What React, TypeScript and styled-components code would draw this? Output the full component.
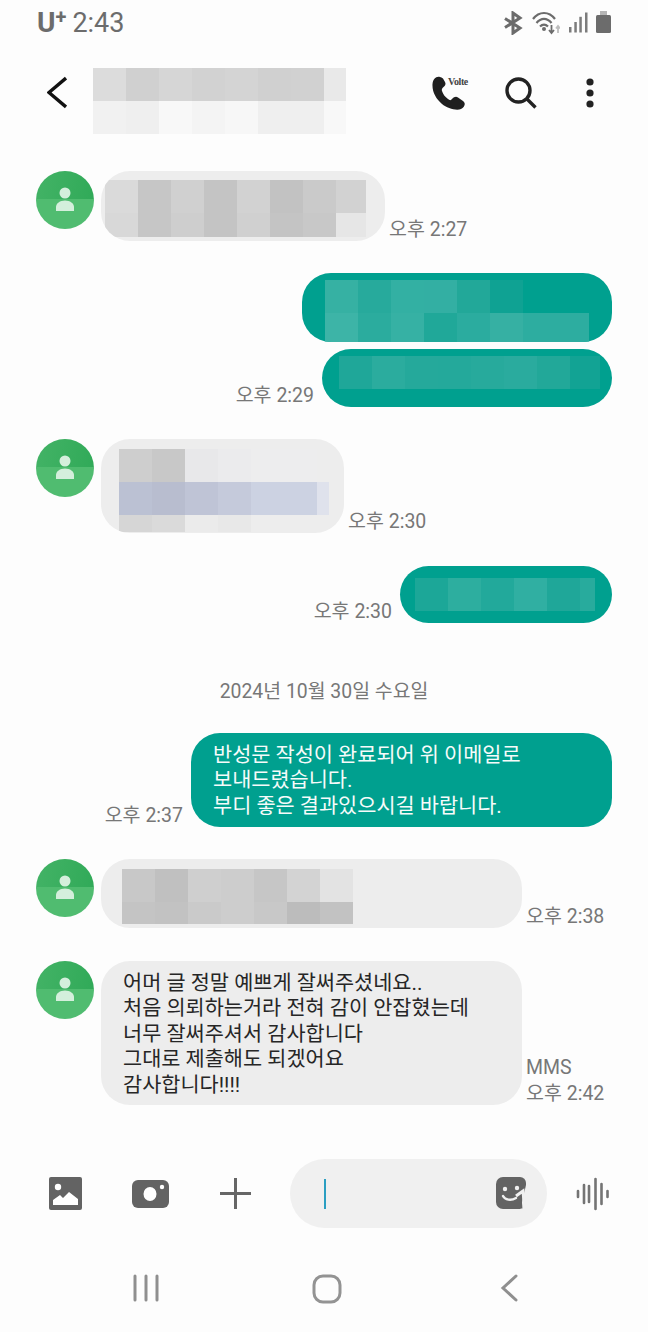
import React from "react";
import styled, { createGlobalStyle } from "styled-components";

const GlobalStyle = createGlobalStyle`
  html, body {
    margin: 0;
    padding: 0;
    background: #fdfdfd;
  }
`;

const Page = styled.div`
  width: 648px;
  height: 1332px;
  display: flex;
  flex-direction: column;
  background: #fdfdfd;
  font-family: Roboto, "Noto Sans CJK KR", sans-serif;
  overflow: hidden;
`;

const StatusBar = styled.div`
  height: 46px;
  padding: 0 37px;
  display: flex;
  align-items: center;
  justify-content: space-between;
  color: #6c6c6c;
  flex-shrink: 0;
`;

const Carrier = styled.div`
  display: flex;
  align-items: center;
  font-size: 27px;
  line-height: 30px;
`;

const CarrierName = styled.span`
  font-weight: 700;
  font-size: 28px;
  margin-right: 6px;
  display: flex;
`;

const CarrierPlus = styled.span`
  font-size: 20px;
  line-height: 20px;
  margin-top: -1px;
`;

const StatusIcons = styled.div`
  display: flex;
  align-items: center;
  gap: 8px;
`;

const Toolbar = styled.div`
  height: 110px;
  padding: 22px 0 0 47px;
  box-sizing: border-box;
  display: flex;
  align-items: flex-start;
  flex-shrink: 0;
`;

const BackSlot = styled.div`
  width: 46px;
  height: 50px;
  display: flex;
  align-items: center;
`;

const Actions = styled.div`
  margin-left: 86px;
  height: 50px;
  display: flex;
  align-items: center;
`;

const PhoneAction = styled.div`
  position: relative;
  width: 73px;
  height: 34px;
`;

const VolteTag = styled.span`
  position: absolute;
  left: 16px;
  top: 1px;
  font-family: "Liberation Serif", serif;
  font-weight: 700;
  font-size: 10px;
  line-height: 10px;
  letter-spacing: -0.4px;
  color: #444;
`;

const SearchAction = styled.div`
  width: 81px;
  height: 32px;
`;

const MessageList = styled.div`
  flex: 1;
  padding: 15px 36px 0;
  display: flex;
  flex-direction: column;
  min-height: 0;
`;

const Row = styled.div<{ $out?: boolean; $top: number }>`
  display: flex;
  align-items: flex-end;
  justify-content: ${(p) => (p.$out ? "flex-end" : "flex-start")};
  margin-top: ${(p) => p.$top}px;
`;

const Avatar = styled.div`
  width: 58px;
  height: 58px;
  border-radius: 50%;
  margin-right: 7px;
  align-self: flex-start;
  flex-shrink: 0;
  background: linear-gradient(to bottom, transparent 48%, #50bc70 48%),
    linear-gradient(100deg, #43b366, #2fa957);
`;

const AvatarIcon = styled.svg`
  display: block;
`;

const Bubble = styled.div<{ $out?: boolean; $w: number; $h: number }>`
  width: ${(p) => p.$w}px;
  height: ${(p) => p.$h}px;
  box-sizing: border-box;
  flex-shrink: 0;
  overflow: hidden;
  border-radius: 29px;
  background: ${(p) => (p.$out ? "#00a08f" : "#ededed")};
  color: ${(p) => (p.$out ? "#f6fbfa" : "#262626")};
`;

const BlurInset = styled.div<{ $x: number; $y: number }>`
  padding: ${(p) => p.$y}px 0 0 ${(p) => p.$x}px;
`;

const BubbleText = styled.div`
  padding: 10px 0 0 22px;
  font-size: 20.8px;
  line-height: 25.4px;
  white-space: nowrap;
`;

const Time = styled.div<{ $out?: boolean }>`
  flex-shrink: 0;
  font-size: 19.5px;
  line-height: 26px;
  color: #777;
  white-space: nowrap;
  margin: ${(p) => (p.$out ? "0 8px -2px 0" : "0 0 -2px 4px")};
`;

const DateLine = styled.div`
  margin: 57px 0 29px;
  height: 24px;
  line-height: 24px;
  text-align: center;
  font-size: 19.4px;
  color: #777;
`;

const Composer = styled.div`
  height: 69px;
  padding-left: 23px;
  display: flex;
  align-items: center;
  flex-shrink: 0;
`;

const ComposerSlot = styled.div`
  width: 85px;
  height: 100%;
  display: flex;
  align-items: center;
  justify-content: center;
`;

const InputPill = styled.div`
  width: 257px;
  height: 69px;
  margin-left: 12px;
  padding: 0 19px 0 34px;
  box-sizing: border-box;
  border-radius: 35px;
  background: #f0f0f0;
  display: flex;
  align-items: center;
  justify-content: space-between;
`;

const Caret = styled.div`
  width: 2px;
  height: 30px;
  background: #2b9fc2;
`;

const VoiceSlot = styled.div`
  flex: 1;
  padding-left: 29px;
  display: flex;
  align-items: center;
`;

const NavBar = styled.div`
  height: 104px;
  padding: 46px 48px 0 55px;
  box-sizing: border-box;
  display: grid;
  grid-template-columns: repeat(3, 1fr);
  align-items: start;
  justify-items: center;
  flex-shrink: 0;
`;

const BlurSvg = styled.svg`
  display: block;
`;

type Block = { cols: number[]; rows: number[]; cells: (string | null)[][] };

// pixelated (censored) parts of the screenshot
function Blur({ cols, rows, cells }: Block) {
  const w = cols.reduce((a, b) => a + b, 0);
  const h = rows.reduce((a, b) => a + b, 0);
  let y = 0;
  return (
    <BlurSvg width={w} height={h} shapeRendering="crispEdges">
      {cells.map((row, r) => {
        let x = 0;
        const rects = row.map((c, i) => {
          const el = c ? <rect key={i} x={x} y={y} width={cols[i]} height={rows[r]} fill={c} /> : null;
          x += cols[i];
          return el;
        });
        y += rows[r];
        return <g key={r}>{rects}</g>;
      })}
    </BlurSvg>
  );
}

const title: Block = {
  cols: [33, 33, 33, 33, 33, 33, 33, 22],
  rows: [33, 33],
  cells: [
    ["#dcdcdc", "#d0d0d0", "#d6d6d6", "#d2d2d2", "#d4d4d4", "#d0d0d0", "#d1d1d1", "#e9e9e9"],
    ["#f1f1f1", "#efefef", "#f8f8f8", "#f4f4f4", "#f7f7f7", "#efefef", "#efefef", "#f8f8f8"],
  ],
};
const msg1: Block = {
  cols: [33, 33, 33, 33, 33, 33, 33, 30],
  rows: [33, 24],
  cells: [
    ["#dadada", "#c6c6c6", "#d0d0d0", "#c4c4c4", "#d2d2d2", "#c2c2c2", "#cacaca", "#d2d2d2"],
    ["#d8d8d8", "#c6c6c6", "#cecece", "#c4c4c4", "#d0d0d0", "#c4c4c4", "#c8c8c8", "#e6e6e6"],
  ],
};
const out1: Block = {
  cols: [33, 33, 33, 33, 33, 33, 33, 33],
  rows: [33, 29],
  cells: [
    ["#36b1a3", "#27aa9c", "#33b0a3", "#33afa3", "#22a899", "#0fa293", null, null],
    ["#3db4a7", "#2bac9e", "#36b1a4", "#20a899", "#2bac9f", "#36b0a3", "#2dada0", "#2dada0"],
  ],
};
const out2: Block = {
  cols: [33, 33, 33, 33, 33, 33, 33, 30],
  rows: [33],
  cells: [["#1fa799", "#2bac9e", "#25a99b", "#24a99b", "#27aa9c", "#2aab9e", "#22a899", "#12a394"]],
};
const msg2: Block = {
  cols: [33, 33, 33, 33, 33, 33, 12],
  rows: [33, 33, 17],
  cells: [
    ["#cecece", "#c8c8c8", "#e8e8ea", "#ebebed", "#ededee", "#ededee", "#ededed"],
    ["#bbc1d3", "#b8bdcf", "#bfc4d6", "#c5cadb", "#ccd2e2", "#ccd2e2", "#dfe2ec"],
    ["#d6d6d6", "#dadada", "#ebebeb", "#e8e8e8", "#ededed", "#ededed", null],
  ],
};
const out3: Block = {
  cols: [33, 33, 33, 33, 33, 15],
  rows: [33],
  cells: [["#1ca798", "#2dae9f", "#22a99b", "#30afa2", "#1fa799", "#28ab9d"]],
};
const msg3: Block = {
  cols: [33, 33, 33, 33, 33, 33, 33],
  rows: [33, 22],
  cells: [
    ["#c8c8c8", "#c0c0c0", "#cfcfcf", "#cdcdcd", "#c6c6c6", "#d3d3d3", "#e3e3e3"],
    ["#c4c4c4", "#c2c2c2", "#cacaca", "#cdcdcd", "#c8c8c8", "#bcbcbc", "#c2c2c2"],
  ],
};

const PersonAvatar = () => (
  <Avatar>
    <AvatarIcon width="58" height="58" viewBox="0 0 58 58">
      <circle cx="29" cy="22" r="5.5" fill="#d4efdc" />
      <path d="M20 40v-4c0-3.6 4-6.5 9-6.5s9 2.900 9 6.500v4z" fill="#d4efdc" />
    </AvatarIcon>
  </Avatar>
);

export default function App() {
  return (
    <Page>
      <GlobalStyle />
      <StatusBar>
        <Carrier>
          <CarrierName>
            U<CarrierPlus>+</CarrierPlus>
          </CarrierName>
          2:43
        </Carrier>
        <StatusIcons>
          <svg width="21" height="24" viewBox="0 0 21 24" fill="none" stroke="#6c6c6c" strokeWidth="3">
            <path d="M2 7.500l15 9.500-7 5V2l7 5L2 16.500" />
          </svg>
          <svg width="28" height="24" viewBox="0 0 28 24" fill="none" stroke="#6c6c6c" strokeWidth="2.200">
            <path d="M1 8C7 0 17 0 23 8M4.500 12C9 6.500 15 6.500 19.500 12M8 15.500c2.500-2.500 5.500-2.500 8 0" />
            <circle cx="12" cy="18" r="2" fill="#6c6c6c" stroke="none" />
            <path d="M19.500 14v8M17 19l2.500 3 2.500-3" strokeWidth="1.800" />
            <path d="M26 22v-7M24 17.500l2-2.500 2 2.500" stroke="#bdbdbd" strokeWidth="1.800" />
          </svg>
          <svg width="20" height="24" viewBox="0 0 20 24" fill="#7c7c7c">
            <rect x="1" y="16" width="2.500" height="5.500" />
            <rect x="6.300" y="11" width="2.500" height="10.500" />
            <rect x="11.300" y="5.800" width="2.500" height="15.700" />
            <rect x="17" y="1.500" width="2.500" height="20" />
          </svg>
          <svg width="15" height="24" viewBox="0 0 15 24">
            <rect x="4" y="0" width="7" height="4" fill="#b5b5b5" />
            <rect x="0" y="4" width="15" height="18" rx="1.500" fill="#6c6c6c" />
          </svg>
        </StatusIcons>
      </StatusBar>

      <Toolbar>
        <BackSlot>
          <svg width="20" height="34" viewBox="0 0 20 34" fill="none" stroke="#111" strokeWidth="3.400">
            <path d="M19 2L2 16.500 19 31" />
          </svg>
        </BackSlot>
        <Blur {...title} />
        <Actions>
          <PhoneAction>
            <svg width="34" height="34" viewBox="0 0 34 34">
              <path
                d="M8 1C4 0 1 3 .5 8 0 16 4 23 10 28c5 4 14 7 19 5 4-2 5-6 2-8l-5-3.500c-2-1.500-4-.5-6 1.500-1 1.500-2.500 1.500-4 0-3-2-5-5-6-8-.5-1.500 0-2.500 1.500-4 2-1.500 2.500-3 1.500-5l-2-3.500C10 1.500 9 1 8 1z"
                fill="#1f1f1f"
              />
            </svg>
            <VolteTag>Volte</VolteTag>
          </PhoneAction>
          <SearchAction>
            <svg width="32" height="32" viewBox="0 0 32 32" fill="none" stroke="#222" strokeWidth="3.400">
              <circle cx="13.500" cy="13.500" r="11.500" />
              <path d="M22 22l8.500 8.500" />
            </svg>
          </SearchAction>
          <svg width="8" height="30" viewBox="0 0 8 30" fill="#222">
            <circle cx="4" cy="4" r="3.600" />
            <circle cx="4" cy="15" r="3.600" />
            <circle cx="4" cy="26" r="3.600" />
          </svg>
        </Actions>
      </Toolbar>

      <MessageList>
        <Row $top={0}>
          <PersonAvatar />
          <Bubble $w={284} $h={70}>
            <BlurInset $x={4} $y={9}>
              <Blur {...msg1} />
            </BlurInset>
          </Bubble>
          <Time>오후 2:27</Time>
        </Row>
        <Row $out $top={32}>
          <Bubble $out $w={310} $h={69}>
            <BlurInset $x={23} $y={7}>
              <Blur {...out1} />
            </BlurInset>
          </Bubble>
        </Row>
        <Row $out $top={7}>
          <Time $out>오후 2:29</Time>
          <Bubble $out $w={290} $h={58}>
            <BlurInset $x={17} $y={7}>
              <Blur {...out2} />
            </BlurInset>
          </Bubble>
        </Row>
        <Row $top={32}>
          <PersonAvatar />
          <Bubble $w={243} $h={94}>
            <BlurInset $x={18} $y={10}>
              <Blur {...msg2} />
            </BlurInset>
          </Bubble>
          <Time>오후 2:30</Time>
        </Row>
        <Row $out $top={33}>
          <Time $out>오후 2:30</Time>
          <Bubble $out $w={212} $h={57}>
            <BlurInset $x={15} $y={12}>
              <Blur {...out3} />
            </BlurInset>
          </Bubble>
        </Row>
        <DateLine>2024년 10월 30일 수요일</DateLine>
        <Row $out $top={0}>
          <Time $out>오후 2:37</Time>
          <Bubble $out $w={421} $h={94}>
            <BubbleText>
              반성문 작성이 완료되어 위 이메일로
              <br />
              보내드렸습니다.
              <br />
              부디 좋은 결과있으시길 바랍니다.
            </BubbleText>
          </Bubble>
        </Row>
        <Row $top={32}>
          <PersonAvatar />
          <Bubble $w={421} $h={69}>
            <BlurInset $x={21} $y={10}>
              <Blur {...msg3} />
            </BlurInset>
          </Bubble>
          <Time>오후 2:38</Time>
        </Row>
        <Row $top={33}>
          <PersonAvatar />
          <Bubble $w={421} $h={144}>
            <BubbleText>
              어머 글 정말 예쁘게 잘써주셨네요..
              <br />
              처음 의뢰하는거라 전혀 감이 안잡혔는데
              <br />
              너무 잘써주셔서 감사합니다
              <br />
              그대로 제출해도 되겠어요
              <br />
              감사합니다!!!!
            </BubbleText>
          </Bubble>
          <Time>
            MMS
            <br />
            오후 2:42
          </Time>
        </Row>
      </MessageList>

      <Composer>
        <ComposerSlot>
          <svg width="33" height="33" viewBox="0 0 33 33">
            <rect width="33" height="33" rx="2" fill="#636363" />
            <circle cx="9" cy="10" r="3.200" fill="#fff" />
            <path d="M4 28v-5l7-5 3 3 6-6 9 7v6z" fill="#fff" />
          </svg>
        </ComposerSlot>
        <ComposerSlot>
          <svg width="37" height="28" viewBox="0 0 37 28">
            <rect width="37" height="28" rx="6" fill="#636363" />
            <ellipse cx="18" cy="14" rx="6.500" ry="7" fill="#fff" />
            <circle cx="30" cy="7" r="2.200" fill="#fff" />
          </svg>
        </ComposerSlot>
        <ComposerSlot>
          <svg width="31" height="31" viewBox="0 0 31 31" stroke="#666" strokeWidth="3">
            <path d="M15.500 0v31M0 15.500h31" />
          </svg>
        </ComposerSlot>
        <InputPill>
          <Caret />
          <svg width="32" height="34" viewBox="0 0 32 34">
            <path d="M7 0h17a6 6 0 0 1 6 6v26H7a7 7 0 0 1-7-7V7a7 7 0 0 1 7-7z" fill="#636363" />
            <path d="M30 8v26H24z" fill="#f0f0f0" />
            <circle cx="9" cy="12" r="2.200" fill="#f0f0f0" />
            <circle cx="21" cy="11" r="2.200" fill="#f0f0f0" />
            <path d="M7 19c2 4 8 5 13 2" fill="none" stroke="#f0f0f0" strokeWidth="2.400" strokeLinecap="round" />
            <path d="M20 19l7-5 1.500 18" fill="none" stroke="#f0f0f0" strokeWidth="3" />
            <path d="M25.500 18l.9 13.500h-3V22z" fill="#636363" />
          </svg>
        </InputPill>
        <VoiceSlot>
          <svg width="34" height="34" viewBox="0 0 34 34" stroke="#747474" strokeWidth="2.600" strokeLinecap="round">
            <path d="M2 14v6M8 8v18M13 9v16M19.500 2v30M25.500 7v20M31.500 14v6" />
          </svg>
        </VoiceSlot>
      </Composer>

      <NavBar>
        <svg width="26" height="28" viewBox="0 0 26 28" stroke="#8f8f8f" strokeWidth="3" strokeLinecap="round">
          <path d="M2 2v24M13 2v24M24 2v24" />
        </svg>
        <svg width="30" height="30" viewBox="0 0 30 30" fill="none" stroke="#939393" strokeWidth="3">
          <rect x="2" y="2" width="26" height="26" rx="9" />
        </svg>
        <svg width="18" height="28" viewBox="0 0 18 28" fill="none" stroke="#8f8f8f" strokeWidth="3" strokeLinecap="round">
          <path d="M16 2L3 14l13 12" />
        </svg>
      </NavBar>
    </Page>
  );
}
